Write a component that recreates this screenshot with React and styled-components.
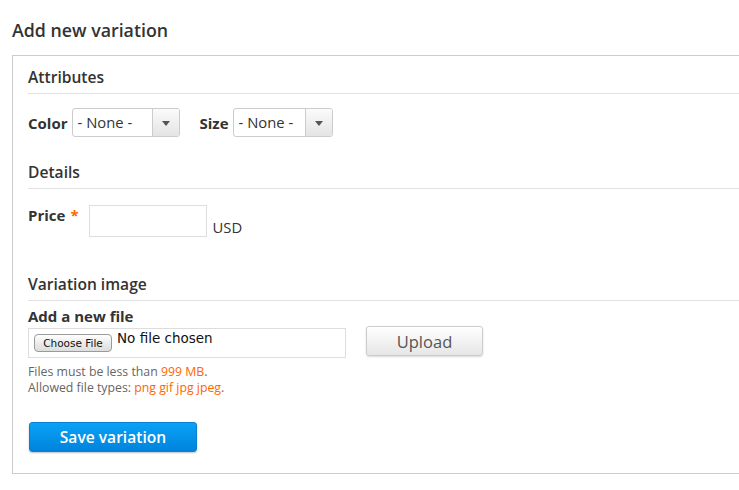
import React from "react";
import styled, { createGlobalStyle } from "styled-components";

const Global = createGlobalStyle`
  html, body { margin: 0; padding: 0; background: #fff; }
  body { font-family: "Open Sans", "Liberation Sans", sans-serif; color: #333; }
  * { box-sizing: border-box; }
`;

const Page = styled.div`
  padding: 18px 0 0 12px;
  overflow: hidden;
  width: 739px;
`;

const Title = styled.h2`
  margin: 0 0 13px;
  font-size: 17.8px;
  line-height: 24px;
  font-weight: 600;
  color: #333;
`;

const Fieldset = styled.div`
  border: 1px solid #ccc;
  border-right: none;
  padding: 11px 0 21px 15px;
  display: flex;
  flex-direction: column;
`;

const Heading = styled.div`
  font-size: 15.6px;
  line-height: 20px;
  font-weight: 600;
  color: #333;
  padding-bottom: 6px;
  border-bottom: 1px solid #e2e2e2;
  margin-top: ${(p) => p.$top || 0}px;
`;

const Row = styled.div`
  display: flex;
  align-items: ${(p) => p.$align || "center"};
  margin-top: ${(p) => p.$top || 0}px;
`;

const Label = styled.label`
  font-size: 15px;
  line-height: 20px;
  font-weight: 700;
  color: #333;
  margin-right: ${(p) => p.$gap ?? 4}px;
  margin-left: ${(p) => p.$left || 0}px;
  white-space: nowrap;
`;

const Star = styled.span`
  color: #f60;
  margin-left: 5px;
`;

const Select = styled.div`
  display: flex;
  width: ${(p) => p.$w}px;
  height: 29px;
  border: 1px solid #ccc;
  border-radius: 3px;
  overflow: hidden;
  background: #fff;
`;

const SelectText = styled.span`
  flex: 1;
  font-size: 14.8px;
  line-height: 27px;
  padding-left: 5px;
  color: #333;
`;

const Arrow = styled.span`
  width: 27px;
  border-left: 1px solid #ccc;
  background: linear-gradient(#fbfbfb, #e4e4e4);
  display: flex;
  align-items: center;
  justify-content: center;
  &::after {
    content: "";
    border-left: 4px solid transparent;
    border-right: 4px solid transparent;
    border-top: 5px solid #555;
    margin-top: 1px;
  }
`;

const TextInput = styled.div`
  width: 118px;
  height: 32px;
  border: 1px solid #ddd;
  background: #fff;
  margin-left: 10px;
`;

const Suffix = styled.span`
  font-size: 14.8px;
  line-height: 20px;
  margin-left: 6px;
  align-self: center;
  padding-top: 12px;
`;

const FileLabel = styled.div`
  font-size: 15px;
  line-height: 20px;
  font-weight: 700;
  margin-top: 5px;
`;

const FileBox = styled.div`
  width: 318px;
  height: 30px;
  border: 1px solid #ddd;
  margin-top: 2px;
  display: flex;
  align-items: flex-start;
  padding: 5px 0 0 5px;
`;

const ChooseBtn = styled.span`
  width: 78px;
  height: 18px;
  border: 1px solid #9a9a9a;
  border-radius: 4px;
  background: linear-gradient(#ffffff, #e8e8e8 60%, #dedede);
  font-family: "DejaVu Sans", "Liberation Sans", sans-serif;
  font-size: 10.5px;
  line-height: 16px;
  text-align: center;
  color: #111;
`;

const NoFile = styled.span`
  font-family: "DejaVu Sans", "Liberation Sans", sans-serif;
  font-size: 13.5px;
  line-height: 16px;
  margin: -4px 0 0 5px;
  color: #111;
`;

const UploadBtn = styled.button`
  width: 117px;
  height: 30px;
  margin-left: 20px;
  border: 1px solid #ccc;
  border-radius: 3px;
  background: linear-gradient(#ffffff, #e6e6e6);
  box-shadow: 0 1px 2px rgba(0, 0, 0, 0.15);
  font-family: "Open Sans", sans-serif;
  font-size: 16.5px;
  color: #555;
  padding: 0;
`;

const Help = styled.div`
  font-size: 12.3px;
  line-height: 15.5px;
  color: #666;
  margin-top: 6px;
`;

const Accent = styled.span`
  color: #f60;
`;

const SaveBtn = styled.button`
  align-self: flex-start;
  width: 168px;
  height: 30px;
  margin: 27px 0 0 1px;
  border: 1px solid #0a7fd0;
  border-radius: 3px;
  background: linear-gradient(#0aa2f6, #0083dc);
  box-shadow: 0 1px 2px rgba(0, 0, 0, 0.25);
  color: #fff;
  font-family: "Open Sans", sans-serif;
  font-size: 15.6px;
  font-weight: 600;
  padding: 0;
`;

export default function App() {
  return (
    <Page>
      <Global />
      <Title>Add new variation</Title>
      <Fieldset>
        <Heading>Attributes</Heading>
        <Row $top={14}>
          <Label>Color</Label>
          <Select $w={108}>
            <SelectText>- None -</SelectText>
            <Arrow />
          </Select>
          <Label $left={20}>Size</Label>
          <Select $w={100}>
            <SelectText>- None -</SelectText>
            <Arrow />
          </Select>
        </Row>
        <Heading $top={25}>Details</Heading>
        <Row $top={16} $align="flex-start">
          <Label $gap={0}>
            Price<Star>*</Star>
          </Label>
          <TextInput />
          <Suffix>USD</Suffix>
        </Row>
        <Heading $top={37}>Variation image</Heading>
        <FileLabel>Add a new file</FileLabel>
        <Row $align="flex-start">
          <FileBox>
            <ChooseBtn>Choose File</ChooseBtn>
            <NoFile>No file chosen</NoFile>
          </FileBox>
          <UploadBtn>Upload</UploadBtn>
        </Row>
        <Help>
          Files must be less than <Accent>999 MB</Accent>.
          <br />
          Allowed file types: <Accent>png gif jpg jpeg</Accent>.
        </Help>
        <SaveBtn>Save variation</SaveBtn>
      </Fieldset>
    </Page>
  );
}
